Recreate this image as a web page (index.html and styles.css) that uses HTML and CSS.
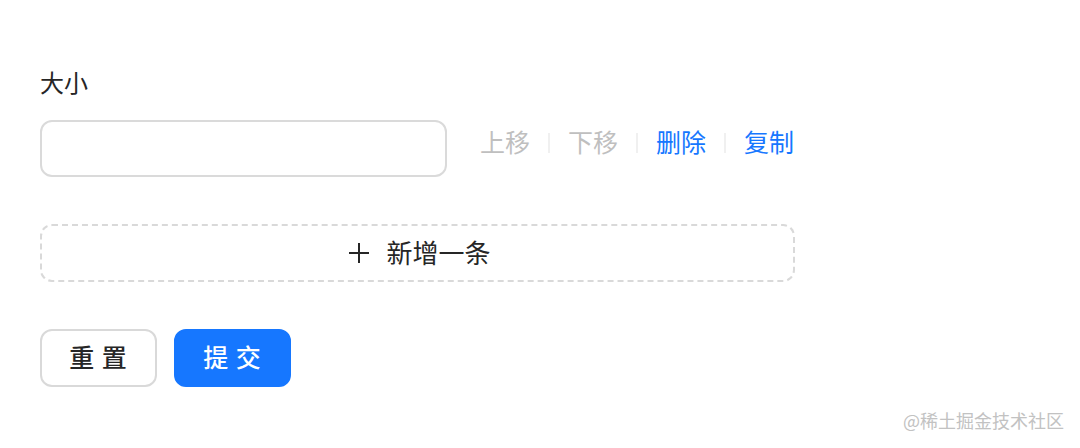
FILE: index.html
```html
<!DOCTYPE html>
<html lang="zh-CN">
<head>
<meta charset="utf-8">
<link rel="stylesheet" href="styles.css">
</head>
<body>
<div class="form">
  <div class="label">大小</div>
  <div class="row">
    <div class="input"></div>
    <div class="actions">
      <span class="act disabled">上移</span>
      <span class="sep"></span>
      <span class="act disabled">下移</span>
      <span class="sep"></span>
      <span class="act link">删除</span>
      <span class="sep"></span>
      <span class="act link">复制</span>
    </div>
  </div>
  <div class="add">
    <svg class="plus" width="22" height="22" viewBox="0 0 22 22"><path d="M11 1v20M1 11h20" stroke="#262626" stroke-width="2" fill="none"/></svg>
    <span class="add-text">新增一条</span>
  </div>
  <div class="buttons">
    <div class="btn"><span>重 置</span></div>
    <div class="btn primary"><span>提 交</span></div>
  </div>
</div>
<div class="watermark">@稀土掘金技术社区</div>
</body>
</html>
```

FILE: styles.css
```css
html, body {
  margin: 0;
  padding: 0;
  background: #ffffff;
  font-family: "Noto Sans CJK SC", "Noto Sans", sans-serif;
  color: #222222;
}
.form {
  padding: 64px 0 0 40px;
  display: flex;
  flex-direction: column;
  align-items: flex-start;
}
.label {
  font-size: 24px;
  line-height: 36px;
  color: #262626;
}
.row {
  margin-top: 20px;
  display: flex;
  align-items: center;
}
.input {
  width: 403px;
  height: 53px;
  border: 2px solid #dadada;
  border-radius: 12px;
  background: #fff;
}
.actions {
  margin-left: 33px;
  margin-bottom: 16px;
  display: flex;
  align-items: center;
}
.act {
  font-size: 25px;
  line-height: 36px;
}
.disabled { color: #bfbfbf; }
.link { color: #1677ff; }
.sep {
  width: 2px;
  height: 20px;
  background: #f0f0f0;
  margin: 4px 18px 0;
}
.add {
  margin-top: 47px;
  width: 751px;
  height: 54px;
  border: 2px dashed #d9d9d9;
  border-radius: 12px;
  display: flex;
  align-items: center;
  justify-content: center;
  font-size: 26px;
  color: #262626;
}
.plus {
  margin-right: 16px;
  margin-left: 4px;
}
.add-text {
  line-height: 36px;
  padding-bottom: 2px;
}
.buttons {
  margin-top: 47px;
  display: flex;
  gap: 17px;
}
.btn {
  width: 113px;
  height: 54px;
  border: 2px solid #d9d9d9;
  border-radius: 12px;
  display: flex;
  align-items: center;
  justify-content: center;
  font-size: 25px;
  font-weight: 500;
  color: #262626;
  background: #fff;
}
.btn span {
  line-height: 36px;
  padding-bottom: 4px;
  letter-spacing: 1px;
}
.btn.primary {
  background: #1677ff;
  border-color: #1677ff;
  color: #fff;
}
.watermark {
  position: absolute;
  left: 903px;
  top: 408px;
  font-size: 18px;
  line-height: 24px;
  color: #c2c2c2;
}
```
